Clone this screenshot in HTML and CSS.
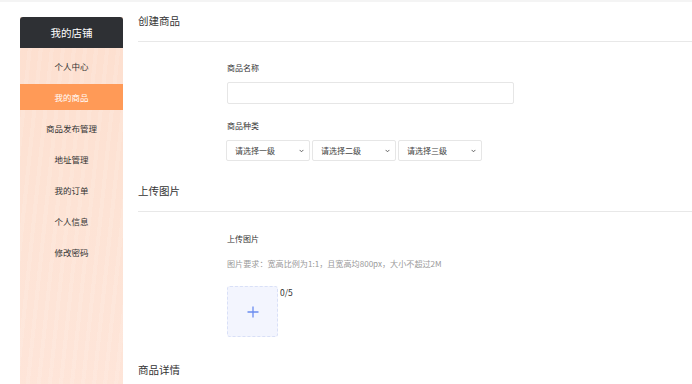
FILE: index.html
```html
<!DOCTYPE html>
<html lang="zh">
<head>
  <meta charset="UTF-8">
  <title>我的店铺 - 创建商品</title>
  <link rel="stylesheet" href="styles.css">
</head>
<body>
  <div class="topbar"></div>

  <div class="layout">
    <div class="sidebar">
      <div class="sidebar-head">我的店铺</div>
      <ul class="menu">
        <li>个人中心</li>
        <li class="active">我的商品</li>
        <li>商品发布管理</li>
        <li>地址管理</li>
        <li>我的订单</li>
        <li>个人信息</li>
        <li>修改密码</li>
      </ul>
    </div>

    <div class="main">
      <h2 class="section-title">创建商品</h2>
      <div class="form-block">
        <div class="label">商品名称</div>
        <input type="text" class="text-input">
        <div class="label label-gap">商品种类</div>
        <div class="selects">
          <div class="select-wrap">
            <select><option>请选择一级</option></select>
            <svg class="chev" width="5" height="4" viewBox="0 0 5 4"><path d="M0.6 0.9L2.5 2.8L4.4 0.9" stroke="#555" stroke-width="0.9" fill="none"/></svg>
          </div>
          <div class="select-wrap">
            <select><option>请选择二级</option></select>
            <svg class="chev" width="5" height="4" viewBox="0 0 5 4"><path d="M0.6 0.9L2.5 2.8L4.4 0.9" stroke="#555" stroke-width="0.9" fill="none"/></svg>
          </div>
          <div class="select-wrap">
            <select><option>请选择三级</option></select>
            <svg class="chev" width="5" height="4" viewBox="0 0 5 4"><path d="M0.6 0.9L2.5 2.8L4.4 0.9" stroke="#555" stroke-width="0.9" fill="none"/></svg>
          </div>
        </div>
      </div>

      <h2 class="section-title">上传图片</h2>
      <div class="form-block upload-block">
        <div class="label">上传图片</div>
        <div class="hint">图片要求：宽高比例为1:1，且宽高均800px，大小不超过2M</div>
        <div class="upload-row">
          <div class="upload-box">
            <svg width="12" height="12" viewBox="0 0 12 12">
              <path d="M6 0.5V11.5M0.5 6H11.5" stroke="#6b8cf0" stroke-width="1.3" fill="none"/>
            </svg>
          </div>
          <span class="count">0/5</span>
        </div>
      </div>

      <h2 class="section-title no-line">商品详情</h2>
    </div>
  </div>
</body>
</html>
```

FILE: styles.css
```css
body {
  margin: 0;
  font-family: "Noto Sans CJK SC", "Liberation Sans", sans-serif;
  color: #333;
  background: #fff;
}
.topbar {
  height: 2px;
  background: #f4f4f4;
}
.layout {
  display: flex;
  align-items: flex-start;
}
.sidebar {
  width: 103px;
  margin-left: 20px;
  margin-top: 15px;
  height: 380px;
  background:
    repeating-linear-gradient(96deg, rgba(255,255,255,0.10) 0 4px, rgba(255,255,255,0) 4px 11px),
    linear-gradient(180deg, #fddfcf 0%, #fde3d5 50%, #fee5d9 100%);
}
.sidebar-head {
  height: 31px;
  line-height: 31px;
  background: #2e3034;
  color: #fff;
  text-align: center;
  font-size: 10.5px;
  border-radius: 3px 3px 0 0;
}
.menu {
  list-style: none;
  margin: 0;
  padding: 5px 0 0;
}
.menu li {
  height: 26px;
  line-height: 26px;
  margin-bottom: 5px;
  text-align: center;
  font-size: 8.5px;
  color: #333;
}
.menu li.active {
  background: #ff9a57;
  color: #fff;
}
.main {
  flex: 1;
  margin-left: 15px;
}
.section-title {
  margin: 0;
  height: 39px;
  line-height: 38px;
  font-size: 10.5px;
  font-weight: normal;
  color: #333;
  border-bottom: 1px solid #e8e8e8;
}
.section-title.no-line {
  border-bottom: none;
  margin-top: 14px;
}
.form-block {
  padding: 20px 0 11px 89px;
}
.label {
  font-size: 8px;
  line-height: 12px;
  color: #333;
}
.label-gap {
  margin-top: 16px;
}
.text-input {
  display: block;
  box-sizing: border-box;
  width: 287px;
  height: 22px;
  margin-top: 8px;
  border: 1px solid #e6e6e6;
  border-radius: 2px;
  outline: none;
}
.selects {
  display: flex;
  gap: 2px;
  margin-top: 8px;
  margin-left: -1px;
}
.select-wrap {
  position: relative;
  width: 84px;
  height: 21px;
}
.select-wrap select {
  -webkit-appearance: none;
  appearance: none;
  display: block;
  box-sizing: border-box;
  width: 100%;
  height: 100%;
  margin: 0;
  padding: 0 8px;
  font-family: inherit;
  font-size: 8px;
  color: #444;
  background: #fff;
  border: 1px solid #e6e6e6;
  border-radius: 2px;
  outline: none;
}
.chev {
  position: absolute;
  right: 6px;
  top: 9px;
  pointer-events: none;
}
.upload-block {
  padding-top: 21px;
  padding-bottom: 0;
}
.hint {
  margin-top: 13px;
  font-size: 8.1px;
  line-height: 12px;
  color: #999;
}
.upload-row {
  display: flex;
  align-items: flex-start;
  margin-top: 16px;
}
.upload-box {
  box-sizing: border-box;
  width: 51px;
  height: 51px;
  background: #f3f5fe;
  border: 1px dashed #d9e0f7;
  border-radius: 3px;
  display: flex;
  align-items: center;
  justify-content: center;
}
.count {
  margin-left: 2px;
  font-size: 8.5px;
  line-height: 12px;
  color: #333;
}
```
